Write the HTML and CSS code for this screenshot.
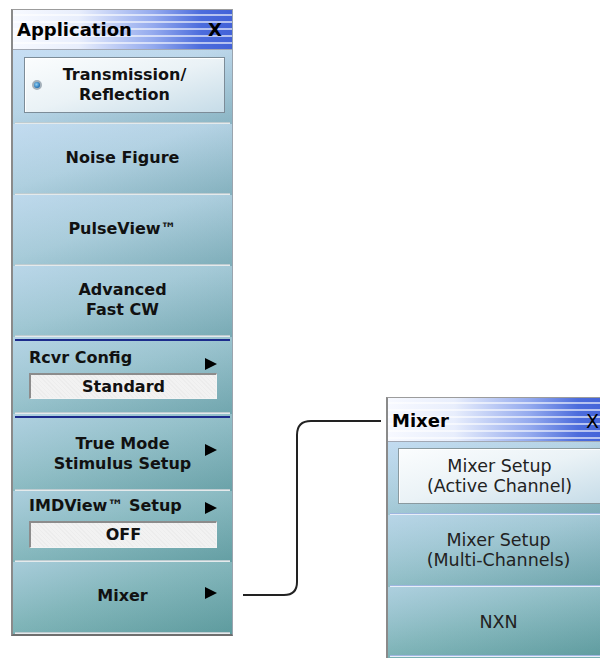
FILE: index.html
```html
<!DOCTYPE html>
<html lang="en">
<head>
    <meta charset="UTF-8">
    <title>Application Menu</title>
    <link rel="stylesheet" href="styles.css">
</head>
<body>
    <div class="stage">
        <div class="panel app-panel">
            <div class="title-bar">
                <span>Application</span>
                <span class="close">X</span>
            </div>
            <div class="item item-first">
                <div class="button selected">
                    <span class="radio"></span>
                    <span>Transmission/<br>Reflection</span>
                </div>
            </div>
            <div class="item">Noise Figure</div>
            <div class="item">PulseView&trade;</div>
            <div class="item">Advanced<br>Fast CW</div>
            <div class="item item-field group">
                <div class="field-row">
                    <span>Rcvr Config</span>
                    <span class="arrow"></span>
                </div>
                <div class="value-box">Standard</div>
            </div>
            <div class="item item-tall group">
                True Mode<br>Stimulus Setup
                <span class="arrow arrow-abs"></span>
            </div>
            <div class="item item-field item-imd">
                <div class="field-row">
                    <span>IMDView&trade; Setup</span>
                    <span class="arrow"></span>
                </div>
                <div class="value-box">OFF</div>
            </div>
            <div class="item item-last">
                Mixer
                <span class="arrow arrow-abs"></span>
            </div>
        </div>

        <div class="panel mixer-panel">
            <div class="title-bar">
                <span>Mixer</span>
                <span class="close">X</span>
            </div>
            <div class="item item-first">
                <div class="button">Mixer Setup<br>(Active Channel)</div>
            </div>
            <div class="item">Mixer Setup<br>(Multi-Channels)</div>
            <div class="item item-nxn">NXN</div>
        </div>
    </div>

    <svg class="connector" width="600" height="658" viewBox="0 0 600 658">
        <path d="M243 595 H284 Q297 595 297 582 V435 Q297 421 311 421 H381" fill="none" stroke="#222" stroke-width="2"/>
    </svg>
</body>
</html>
```

FILE: styles.css
```css
html, body {
    margin: 0;
    overflow: hidden;
    background: #fff;
}
body {
    position: relative;
    width: 600px;
    height: 658px;
    font-family: 'DejaVu Sans', sans-serif;
    color: #111;
}
.stage {
    display: flex;
    align-items: flex-start;
    padding: 9px 0 0 11px;
}
.panel {
    flex-shrink: 0;
    box-sizing: border-box;
    border-top: 1px solid #9c9c9c;
    border-left: 2px solid #8a8a8a;
    border-right: 1px solid #9aa4ae;
    border-bottom: 2px solid #6e6e6e;
    background: linear-gradient(to bottom, #bed8ee, #78b0b4);
}
.app-panel {
    width: 222px;
}
.mixer-panel {
    width: 224px;
    margin-left: 153px;
    margin-top: 388px;
    height: 261px;
    border-bottom: 0;
    overflow: hidden;
}
.title-bar {
    display: flex;
    justify-content: space-between;
    align-items: center;
    box-sizing: border-box;
    height: 40px;
    padding: 0 10px 0 4px;
    font-weight: bold;
    font-size: 18px;
    color: #000;
    border-bottom: 1px solid #a2a8b4;
    background:
        repeating-linear-gradient(to bottom, transparent 0 4px, rgba(255, 255, 255, 0.6) 4px 6px, transparent 6px 7px),
        linear-gradient(to right, #f7f9ff 0%, #e8eefc 30%, #94aaee 64%, #4c6cdc 86%, #4262d8 100%);
}
.mixer-panel .title-bar {
    height: 44px;
    padding: 2px 10px 0 4px;
}
.mixer-panel .close {
    font-weight: normal;
    font-size: 19px;
}
.item {
    position: relative;
    box-sizing: border-box;
    height: 71px;
    display: flex;
    flex-direction: column;
    justify-content: center;
    align-items: center;
    text-align: center;
    padding-bottom: 4px;
    font-weight: bold;
    font-size: 16px;
    line-height: 20px;
    background: linear-gradient(to bottom right, rgba(214, 232, 255, 0.45), rgba(255, 255, 255, 0.05) 45%, rgba(0, 80, 80, 0.22));
}
.item::after {
    content: "";
    position: absolute;
    left: 2px;
    right: 2px;
    bottom: 0;
    height: 2px;
    background: #e4eaec;
    border-top: 1px solid rgba(120, 150, 160, 0.35);
    box-sizing: border-box;
}
.group::before {
    content: "";
    position: absolute;
    left: 2px;
    right: 2px;
    top: 2px;
    height: 2px;
    background: #1c2c8c;
}
.item-first {
    height: 74px;
    justify-content: flex-start;
    align-items: stretch;
    padding: 7px 7px 0 11px;
}
.button {
    position: relative;
    box-sizing: border-box;
    height: 56px;
    display: flex;
    align-items: center;
    justify-content: center;
    border: 1px solid #7c8c98;
    box-shadow: inset 1px 1px 0 #fff;
    background: linear-gradient(to bottom right, #fbfdfe, #eaf2f6 50%, #c6dce8);
}
.radio {
    position: absolute;
    left: 7px;
    top: 22px;
    width: 10px;
    height: 10px;
    box-sizing: border-box;
    border-radius: 50%;
    border: 2px solid #a4b0ba;
    background: radial-gradient(circle at 40% 40%, #8fd0f4, #1f6fb4 70%);
}
.item-field {
    height: 77px;
    justify-content: flex-start;
    align-items: stretch;
    text-align: left;
    padding: 11px 15px 0 16px;
}
.item-imd {
    height: 71px;
    padding-top: 5px;
}
.field-row {
    display: flex;
    justify-content: space-between;
    height: 20px;
}
.value-box {
    margin-top: 5px;
    height: 26px;
    box-sizing: border-box;
    line-height: 23px;
    text-align: center;
    border-top: 2px solid #8c8c8c;
    border-left: 2px solid #8c8c8c;
    border-right: 1px solid #f4f4f4;
    border-bottom: 1px solid #f4f4f4;
    background:
        repeating-linear-gradient(45deg, rgba(0, 0, 0, 0.025) 0 1px, transparent 1px 3px),
        #f2f2f2;
}
.item-imd .value-box {
    margin-top: 5px;
    height: 27px;
    line-height: 24px;
}
.arrow {
    align-self: flex-end;
    width: 0;
    height: 0;
    margin-bottom: -2px;
    border-left: 12px solid #000;
    border-top: 6px solid transparent;
    border-bottom: 6px solid transparent;
}
.item-imd .arrow {
    margin-bottom: 2px;
}
.arrow-abs {
    position: absolute;
    right: 15px;
    top: 30px;
}
.item-tall {
    height: 77px;
    padding-top: 4px;
    padding-bottom: 2px;
}
.item-last {
    height: 72px;
}
.item-last .arrow-abs {
    top: 25px;
}
.mixer-panel .item {
    font-weight: normal;
    font-size: 17.5px;
    color: #222;
    height: 72px;
    padding-bottom: 2px;
}
.mixer-panel .item::after {
    background: #e8eef8;
    border-top: 1px solid #9eb6e0;
}
.mixer-panel .item-first {
    height: 73px;
    padding: 6px 8px 0 10px;
}
.mixer-panel .button {
    border-color: #8a9aa0;
}
.mixer-panel .item-nxn {
    height: 70px;
    padding-bottom: 0;
}
.connector {
    position: absolute;
    left: 0;
    top: 0;
    pointer-events: none;
}
```
